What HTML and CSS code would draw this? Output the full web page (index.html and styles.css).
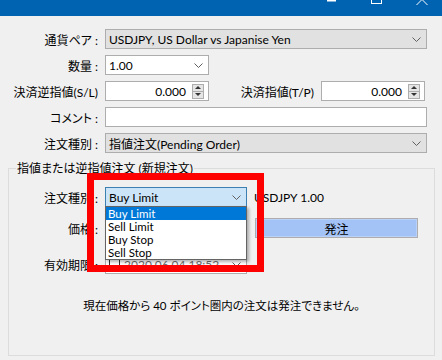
FILE: index.html
```html
<!DOCTYPE html>
<html lang="ja">
<head>
    <meta charset="UTF-8">
    <title>新規注文</title>
    <link rel="stylesheet" href="styles.css">
</head>
<body>
    <div class="window">
        <div class="titlebar">
            <svg width="442" height="16" viewBox="0 0 442 16">
                <rect x="327" y="0" width="9" height="1.5" fill="#fff"/>
                <rect x="371.5" y="-6.5" width="10" height="10" fill="none" stroke="#fff"/>
                <path d="M416.5 5 L422 -0.5 L427.5 5" fill="none" stroke="#fff"/>
            </svg>
        </div>

        <div class="form">
            <div class="row">
                <span class="label">通貨ペア :</span>
                <div class="combo gray long">
                    <span class="value">USDJPY, US Dollar vs Japanise Yen</span>
                    <svg class="chev" width="9" height="5"><polyline points="0.5,0.5 4.5,4.5 8.5,0.5"/></svg>
                </div>
            </div>
            <div class="row">
                <span class="label">数量 :</span>
                <div class="combo short">
                    <span class="value">1.00</span>
                    <svg class="chev" width="9" height="5"><polyline points="0.5,0.5 4.5,4.5 8.5,0.5"/></svg>
                </div>
            </div>
            <div class="row">
                <span class="label">決済逆指値(S/L)</span>
                <div class="numbox">
                    <span class="num">0.000</span>
                    <div class="spin"><span class="up"></span><span class="down"></span></div>
                </div>
                <span class="label2">決済指値(T/P)</span>
                <div class="numbox">
                    <span class="num">0.000</span>
                    <div class="spin"><span class="up"></span><span class="down"></span></div>
                </div>
            </div>
            <div class="row">
                <span class="label">コメント :</span>
                <div class="textbox long"></div>
            </div>
            <div class="row">
                <span class="label">注文種別 :</span>
                <div class="combo gray long">
                    <span class="value">指値注文(Pending Order)</span>
                    <svg class="chev" width="9" height="5"><polyline points="0.5,0.5 4.5,4.5 8.5,0.5"/></svg>
                </div>
            </div>
        </div>

        <div class="group">
            <span class="group-title">指値または逆指値注文 (新規注文)</span>

            <div class="grow first">
                <span class="glabel">注文種別 :</span>
                <div class="combo focus mid">
                    <span class="value">Buy Limit</span>
                    <svg class="chev" width="9" height="5"><polyline points="0.5,0.5 4.5,4.5 8.5,0.5"/></svg>
                    <ul class="droplist">
                        <li class="sel">Buy Limit</li>
                        <li>Sell Limit</li>
                        <li>Buy Stop</li>
                        <li>Sell Stop</li>
                    </ul>
                </div>
                <span class="info">USDJPY 1.00</span>
            </div>
            <div class="grow">
                <span class="glabel">価格 :</span>
                <div class="price-gap"></div>
                <button class="order-btn">発注</button>
            </div>
            <div class="grow expiry">
                <span class="glabel">有効期限 :</span>
                <div class="combo mid dim">
                    <span class="check"></span>
                    <span class="value">2020.06.04 18:52</span>
                    <svg class="chev" width="9" height="5"><polyline points="0.5,0.5 4.5,4.5 8.5,0.5"/></svg>
                </div>
            </div>

            <p class="notice">現在価格から 40 ポイント圏内の注文は発注できません。</p>
        </div>

        <div class="mark"></div>
    </div>
</body>
</html>
```

FILE: styles.css
```css
* {
    margin: 0;
    padding: 0;
    box-sizing: border-box;
}

body {
    font-family: Lato, "Noto Sans CJK JP", sans-serif;
    font-size: 12px;
    color: #000;
    background: #f0f0f0;
}

.window {
    position: relative;
    width: 442px;
    height: 360px;
    overflow: hidden;
    background: #f0f0f0;
}

.titlebar {
    height: 16px;
    background: #0063b1;
}

.titlebar svg {
    display: block;
}

.form {
    padding-top: 13px;
    display: flex;
    flex-direction: column;
    gap: 6px;
}

.row {
    display: flex;
    align-items: center;
    height: 20px;
}

.label {
    width: 98px;
    margin-right: 7px;
    text-align: right;
    white-space: nowrap;
    font-feature-settings: "palt";
}

.label2 {
    width: 112px;
    padding-right: 7px;
    text-align: right;
    white-space: nowrap;
    font-feature-settings: "palt";
}

.combo,
.textbox,
.numbox {
    position: relative;
    display: flex;
    align-items: center;
    height: 20px;
    border: 1px solid #adadad;
    background: #fff;
}

.long {
    width: 322px;
}

.short {
    width: 104px;
}

.mid {
    width: 142px;
}

.gray {
    background: #e1e1e1;
}

.focus {
    background: #cce4f7;
    border-color: #3c7fb1;
}

.value {
    flex: 1;
    padding-left: 3px;
    white-space: nowrap;
    overflow: hidden;
    font-feature-settings: "palt";
}

.chev {
    margin-right: 5px;
    flex: none;
}

.chev polyline {
    fill: none;
    stroke: #606060;
    stroke-width: 1;
}

.numbox {
    width: 104px;
    justify-content: flex-end;
}

.num {
    margin-right: 6px;
}

.spin {
    width: 12px;
    height: 15px;
    margin-right: 4px;
    border: 1px solid #adadad;
    background: #e5e5e5;
    display: flex;
    flex-direction: column;
}

.spin span {
    flex: 1;
    display: flex;
    align-items: center;
    justify-content: center;
}

.spin .up {
    border-bottom: 1px solid #adadad;
}

.spin .up::after {
    content: "";
    border: 3px solid transparent;
    border-top: 0;
    border-bottom: 3px solid #333;
}

.spin .down::after {
    content: "";
    border: 3px solid transparent;
    border-bottom: 0;
    border-top: 3px solid #333;
}

.group {
    position: relative;
    margin: 15px 7px 0 8px;
    height: 188px;
    border: 1px solid #dcdcdc;
}

.group-title {
    position: absolute;
    top: -8px;
    left: 7px;
    padding: 0 1px;
    line-height: 16px;
    background: #f0f0f0;
    white-space: nowrap;
    font-feature-settings: "palt";
}

.grow {
    display: flex;
    align-items: center;
    height: 20px;
    margin-top: 11px;
}

.grow.first {
    margin-top: 18px;
}

.grow.expiry {
    margin-top: 16px;
}

.glabel {
    width: 89px;
    margin-right: 7px;
    text-align: right;
    white-space: nowrap;
    font-feature-settings: "palt";
}

.info {
    margin-left: 7px;
    white-space: nowrap;
}

.price-gap {
    width: 150px;
}

.order-btn {
    width: 163px;
    height: 20px;
    border: 1px solid #adadad;
    background: #a3c2f5;
    box-shadow: inset 0 0 0 1px #b9d1f8;
    font-family: inherit;
    font-size: 12px;
    color: #000;
}

.dim .value {
    color: #6d6d6d;
    padding-left: 4px;
}

.check {
    width: 11px;
    height: 11px;
    margin-left: 3px;
    border: 1px solid #333;
    background: #fff;
    flex: none;
}

.droplist {
    position: absolute;
    top: 18px;
    left: -1px;
    width: 142px;
    list-style: none;
    background: #fff;
    border: 1px solid #646464;
    box-shadow: 2px 2px 3px rgba(0, 0, 0, 0.3);
    z-index: 2;
}

.droplist li {
    height: 13px;
    line-height: 13px;
    padding-left: 2px;
    font-size: 11.5px;
}

.droplist li.sel {
    background: #0078d7;
    color: #fff;
}

.notice {
    margin-top: 24px;
    text-align: center;
    line-height: 16px;
    font-size: 11.5px;
    font-feature-settings: "palt";
}

.mark {
    position: absolute;
    left: 87px;
    top: 173px;
    width: 177px;
    height: 99px;
    border: 7px solid #ff0000;
    z-index: 3;
}
```
